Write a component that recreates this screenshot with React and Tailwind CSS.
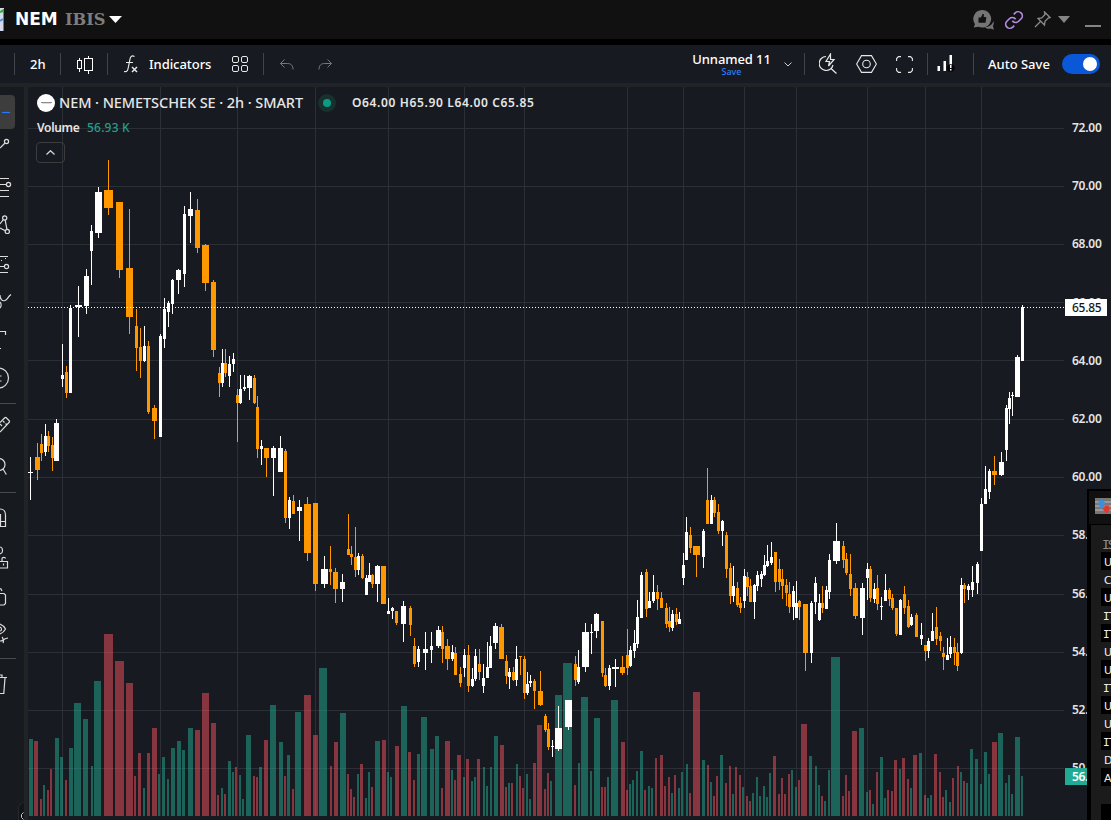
import React from "react";

// Candles per time block. Block units are a third of a pixel.
// Columns: direction (w = up, o = down), centre, body width in px, high, body top, body bottom, low.
const CANDLE_BLOCKS = [
  {
    x: 20,
    y: 150,
    rows: `w 31 5 921 966 969 1050;o 52 5 879 921 960 990;o 64 3 852 882 909 933;w 76 3 822 858 906 918;o 85 3 843 858 888 906;o 97 3 861 885 924 963;w 109 5 807 819 933 933;w 127 3 582 675 687 711;o 139 3 648 666 729 744;w 151 3 465 474 729 729;w 175 7 408 465 471 561;w 199 5 357 378 468 492;w 214 3 225 243 303 405;w 235 7 111 126 249 264;o 265 9 30 120 174 195;o 298 7 156 156 360 384;o 328 7 177 354 501 552;o 349 3 477 528 594 663;o 361 3 534 591 633 684;w 373 3 528 588 633 636;o 385 3 573 588 786 792;o 403 5 765 774 813 867;w 421 3 552 558 861 861;w 433 3 444 477 567 594;w 445 3 453 459 486 531;w 457 3 387 390 462 492;w 475 5 357 360 390 432;w 493 3 168 192 372 411;w 511 5 126 177 198 279;o 532 5 147 180 294 309;o 556 7 282 285 399 423;o 580 5 390 396 600 621;o 598 3 651 669 699 741;o 616 3 597 639 669 681;w 607 3 597 639 699 711;w 628 3 618 642 678 711;w 640 3 609 627 642 666;o 652 3 717 735 759 876;w 661 3 675 717 759 762;w 673 3 675 711 717 723;w 688 5 675 678 714 750;o 703 3 675 684 759 762;o 712 3 738 771 897 924`,
  },
  {
    x: 210,
    y: 340,
    rows: `w 154 3 300 318 327 375;o 169 5 324 324 354 411;w 190 5 318 324 354 468;w 211 5 288 324 396 396;o 226 3 327 333 534 549;w 238 3 471 480 534 567;o 250 3 465 483 522 522;w 268 5 480 501 513 603;o 292 7 471 492 639 663;o 316 5 489 489 732 753;w 343 7 648 687 732 744;o 361 3 618 687 696 735;o 376 5 684 696 747 789;w 397 5 702 726 747 786;o 415 3 522 627 645 645;o 424 3 618 642 651 675;o 436 3 561 651 690 711;w 445 3 639 648 690 705;o 457 3 642 648 714 717;w 469 3 705 714 765 765;w 478 3 669 705 726 726;o 487 3 702 705 732 744;w 502 5 675 678 732 786;o 520 5 678 678 792 792;w 535 3 774 813 822 822;w 547 3 801 804 813 837;o 559 3 813 813 849 855;w 580 5 783 798 852 906;o 601 3 798 804 855 888;o 613 3 894 918 972 981;w 625 3 918 927 966 981;w 646 5 876 927 939 990;w 664 3 876 918 930 969;w 685 5 858 870 918 924;o 697 3 858 876 927 969;o 712 5 897 918 957 990`,
  },
  {
    x: 440,
    y: 480,
    rows: `w 37 3 495 516 537 543;o 46 3 501 519 585 585;o 61 3 561 582 609 621;w 73 3 507 525 564 591;o 85 3 495 525 618 636;w 97 3 564 597 618 621;w 106 3 507 528 597 603;o 118 3 507 552 576 600;w 130 3 552 594 618 639;w 142 3 486 561 594 594;w 151 3 468 498 564 564;w 166 5 429 438 489 507;o 184 5 432 441 537 537;o 199 3 525 543 588 612;w 208 3 564 576 591 627;o 220 3 561 576 600 603;w 229 3 498 537 600 618;o 241 3 528 528 531 585;o 253 3 528 537 639 657;w 262 3 576 612 639 645;w 271 3 585 603 609 621;o 283 3 597 603 633 687;o 301 5 573 633 675 678;o 316 3 702 708 750 756;o 325 3 729 747 801 810;w 337 3 780 798 801 831;w 355 7 678 744 807 813;w 385 7 660 660 741 750;o 406 3 528 552 600 618;w 415 3 510 561 606 612;w 436 7 429 456 561 576;w 454 3 432 456 459 522;w 469 5 399 402 453 474;o 487 3 423 423 579 591;o 496 3 564 585 618 621;w 508 3 555 564 618 630;w 526 7 537 561 567 621;o 547 5 528 561 579 585;o 562 3 447 525 564 585;w 571 3 498 510 558 561;w 583 3 450 489 513 534;w 592 3 360 411 492 504;w 604 3 276 285 414 414;o 619 3 267 276 387 411;w 628 3 336 363 384 384;w 640 3 285 336 363 369;o 652 3 315 336 357 390;o 664 3 336 354 384 384;o 679 3 369 384 432 444;o 688 3 381 423 441 456;w 697 3 390 402 444 453;o 709 3 384 402 426 435`,
  },
  {
    x: 670,
    y: 460,
    rows: `w 28 3 456 477 492 492;w 40 3 279 315 354 375;w 49 3 171 216 300 300;o 61 3 201 225 264 279;o 79 7 258 258 285 351;w 100 3 207 213 291 324;o 112 3 24 120 192 192;w 124 3 105 120 192 192;o 133 3 111 120 159 171;o 145 3 132 156 213 222;w 157 3 180 183 213 258;o 169 3 216 225 327 354;o 181 3 309 324 408 432;w 190 3 318 378 408 426;o 202 3 366 384 435 441;o 211 3 411 429 444 459;w 223 3 327 348 423 444;o 232 3 336 351 381 408;o 241 3 357 378 426 426;w 253 3 372 375 426 477;w 262 3 333 345 378 393;w 274 3 333 342 357 381;w 283 3 285 315 345 348;w 292 3 255 303 318 321;w 304 3 246 291 309 315;o 316 3 276 276 366 396;o 328 3 297 327 366 390;o 337 3 327 357 378 417;o 349 3 357 375 399 438;o 358 3 366 402 441 459;w 370 3 378 393 441 480;w 379 3 363 429 474 474;o 388 3 420 423 441 480;o 406 5 432 432 579 633;w 424 3 423 429 579 609;w 436 3 351 369 426 462;o 457 3 378 429 444 459;w 448 3 402 429 480 483;w 469 3 378 390 447 447;w 478 3 282 300 396 417;w 499 7 189 243 303 312;o 520 3 243 258 300 324;o 529 3 279 297 339 345;o 541 3 282 342 387 408;o 556 5 369 384 468 477;w 577 5 369 384 474 525;w 592 3 309 327 354 420;o 601 3 318 327 414 426;w 613 3 369 387 417 429;o 622 3 345 384 432 450`,
  },
  {
    x: 860,
    y: 300,
    rows: `w 64 3 891 918 921 960;w 76 3 822 870 903 903;o 88 3 864 870 897 918;o 97 3 882 894 924 930;o 109 3 924 924 1002 1008;w 121 3 897 900 1005 1005;o 133 3 858 882 924 942;o 145 3 900 918 981 984;w 154 3 942 951 975 978;o 169 3 939 945 1011 1011;w 184 3 969 1005 1017 1035;o 196 3 1035 1035 1053 1083;w 205 3 1014 1023 1053 1074;w 217 3 939 993 1023 1023;o 229 3 921 981 1017 1035;o 241 3 996 1008 1023 1053;o 250 3 1041 1059 1071 1110;w 262 3 1014 1065 1080 1080;w 271 3 1008 1041 1062 1074;o 283 3 1014 1041 1059 1095;o 292 3 1029 1056 1098 1113;w 304 3 834 855 1059 1062;o 313 3 849 855 867 909;w 325 3 852 858 870 900;w 337 3 798 846 870 891;w 352 3 786 792 849 882;w 364 3 594 612 753 753;w 376 3 498 567 612 612;w 388 3 507 513 576 597;o 403 5 468 513 525 555;w 424 5 456 486 525 528;w 439 3 315 324 450 483;w 448 3 276 294 327 372;w 457 3 276 285 288 348;w 472 5 165 171 291 291;w 487 3 15 21 183 183`,
  },
];

// Volume per time block, same units. Columns: colour, left, right, top.
const VOLUME_BLOCKS = [
  {
    x: 20,
    y: 620,
    rows: `g 27 39 357;r 42 54 363;r 60 66 537;g 69 75 495;r 81 87 510;r 90 96 447;g 105 117 354;g 120 129 411;r 135 141 480;g 147 159 384;g 162 183 249;g 189 204 297;g 213 219 438;g 222 243 183;r 252 279 42;r 285 312 123;r 318 339 189;r 342 348 468;r 354 363 399;g 369 375 504;r 381 390 399;r 396 411 324;g 414 420 462;g 426 435 411;g 441 447 477;g 453 465 384;g 471 483 363;g 486 495 390;g 504 519 324;r 525 540 330;r 546 567 219;r 573 588 309;r 591 597 525;g 603 609 504;r 612 618 522;g 624 633 423;g 636 642 456;r 645 651 441;g 657 663 465;g 666 672 537;g 678 693 345;r 699 705 468;r 708 714 471;g 717 726 441`,
  },
  {
    x: 240,
    y: 640,
    rows: `r 72 84 300;g 90 108 195;g 117 129 306;r 132 138 408;g 141 150 345;r 156 162 447;g 165 183 216;r 192 213 165;r 219 234 285;g 237 261 84;r 270 276 378;r 282 294 306;g 300 318 219;r 321 327 402;r 330 336 447;r 339 345 471;g 351 357 402;r 360 369 372;g 375 381 474;g 384 390 396;r 393 399 441;g 405 420 303;r 426 438 300;g 441 447 396;g 450 456 411;r 465 477 318;g 483 501 198;r 504 513 336;r 519 525 420;g 531 540 342;g 543 561 231;g 570 582 327;g 585 597 288;r 603 609 444`,
  },
  {
    x: 440,
    y: 480,
    rows: `r 15 30 783;g 33 39 870;r 42 48 900;r 51 63 825;g 69 75 891;r 78 87 837;g 93 99 903;g 102 108 891;r 111 120 837;g 129 135 861;g 138 144 918;g 150 156 861;g 162 174 768;r 180 192 795;r 195 201 921;g 204 210 909;r 213 219 909;g 228 234 852;r 237 243 888;r 246 252 924;g 258 264 882;g 267 273 957;r 279 288 849;r 291 306 735;r 312 318 927;r 321 327 879;g 330 336 903;g 345 366 645;g 369 396 549;r 402 408 915;g 414 420 849;g 423 444 651;g 450 456 873;g 462 480 714;r 483 489 921;r 492 498 921;g 501 507 891;g 513 534 660;r 543 555 786;r 558 564 930;g 567 573 912;g 576 582 900;g 588 594 873;g 600 609 813;r 612 618 930;g 624 630 918;g 633 639 924;r 645 651 834;r 660 669 825;r 672 678 918;r 684 690 891;g 693 699 939;r 702 708 885`,
  },
  {
    x: 670,
    y: 460,
    rows: `g 24 30 984;g 33 39 936;g 48 54 912;r 57 63 999;r 69 90 696;g 96 105 900;r 111 117 915;g 120 126 966;r 129 135 1008;r 138 144 948;g 150 159 885;r 165 171 969;r 177 183 918;g 186 192 1002;r 195 201 921;r 207 213 945;g 216 222 981;r 228 234 1008;r 237 243 1023;g 246 252 999;g 258 264 951;g 267 273 1008;g 279 285 978;g 288 294 1011;g 297 303 939;r 309 318 888;r 324 330 1002;r 333 339 954;r 342 348 1002;r 354 360 942;g 363 369 930;g 375 381 981;r 384 390 960;r 393 411 792;g 417 426 888;g 435 441 918;g 444 450 975;r 453 459 1008;g 462 468 1023;g 474 480 930;g 483 510 591;r 516 522 1008;r 525 531 945;r 534 540 993;r 546 561 813;g 567 582 804`,
  },
  {
    x: 860,
    y: 640,
    rows: `g 18 24 456;r 27 33 450;g 36 42 492;r 48 54 396;g 60 69 351;g 72 78 474;r 81 87 450;r 93 99 453;r 102 111 360;g 117 123 387;r 126 135 354;r 141 147 417;g 150 156 444;r 159 171 345;g 177 186 339;r 192 198 465;g 201 207 474;g 210 216 465;r 222 231 342;r 237 243 396;r 246 252 471;g 255 261 450;g 267 273 486;r 276 282 414;r 291 297 378;g 300 306 396;r 309 315 423;g 318 324 429;g 330 339 327;g 345 354 357;g 360 366 432;g 372 381 336;g 384 390 402;r 396 411 306;g 414 429 279;g 435 441 429;g 444 450 405;g 453 459 462;g 465 480 291;g 483 489 408`,
  },
];

const parse = (blocks) =>
  blocks.flatMap(({ x, y, rows }) =>
    rows.split(";").map((row) => {
      const [kind, ...n] = row.split(" ");
      return { kind, x, y, n: n.map(Number) };
    })
  );

const candles = parse(CANDLE_BLOCKS).map(({ kind, x, y, n }) => {
  const [c, w, hi, top, bottom, lo] = n;
  const cx = x + Math.floor(c / 3);
  return { kind, cx, w, hi: y + hi / 3, top: y + top / 3, bottom: y + bottom / 3, lo: y + lo / 3 };
});

const volumes = parse(VOLUME_BLOCKS).map(({ kind, x, y, n }) => ({
  kind,
  x: x + n[0] / 3,
  w: (n[1] - n[0]) / 3,
  y: y + n[2] / 3,
}));

const GRID_X = [62, 160, 237, 315, 388, 464, 524, 627, 683, 744, 796, 867, 925, 981];
const GRID_Y = [128, 186, 244, 302, 360, 419, 477, 535, 594, 652, 710, 768];
const PRICES = ["72.00", "70.00", "68.00", "66.00", "64.00", "62.00", "60.00", "58.00", "56.00", "54.00", "52.00", "50.00"];

function Chart() {
  return (
    <svg className="block h-[733px] w-[1036px]" viewBox="28 87 1036 733" shapeRendering="crispEdges">
      {GRID_X.map((x) => (
        <rect key={x} x={x} y={87} width={1} height={729} fill="#2c2f36" />
      ))}
      {GRID_Y.map((y) => (
        <rect key={y} x={28} y={y} width={1036} height={1} fill="#2c2f36" />
      ))}
      {volumes.map((v, i) => (
        <rect key={i} x={v.x} y={v.y} width={v.w} height={816 - v.y} fill={v.kind === "g" ? "#22ab94" : "#f7525f"} fillOpacity={0.5} />
      ))}
      {candles.map((c, i) => (
        <g key={i} fill={c.kind === "w" ? "#ffffff" : "#ff9800"}>
          <rect x={c.cx} y={c.hi} width={1} height={c.lo - c.hi} />
          <rect x={c.cx - (c.w - 1) / 2} y={c.top} width={c.w} height={c.bottom - c.top} />
        </g>
      ))}
      <line x1={28} x2={1064} y1={307.5} y2={307.5} stroke="#ffffff" strokeDasharray="1 2" />
    </svg>
  );
}

const Sep = () => <div className="h-[22px] w-px shrink-0 bg-[#434448]" />;

function ToolIcon({ top, height, children }) {
  return (
    <svg
      className="block shrink-0"
      width={24}
      height={height}
      viewBox={`0 ${top} 24 ${height}`}
      fill="none"
      stroke="#dcdcdc"
      strokeWidth={1.2}
    >
      {children}
    </svg>
  );
}

function LeftTools() {
  return (
    <div className="flex w-6 shrink-0 flex-col overflow-hidden bg-[#171a1e]">
      <ToolIcon top={87} height={46}>
        <rect x={-8} y={95} width={23} height={34} rx={4} fill="#3d3d3e" stroke="none" />
        <path d="M2 112.5h8" stroke="#2979ff" />
      </ToolIcon>
      <ToolIcon top={133} height={32}>
        <circle cx={6.5} cy={141.5} r={2.1} />
        <path d="M5 143L0 148" />
      </ToolIcon>
      <ToolIcon top={165} height={40}>
        <path d="M0 178.5h9M0 184.5h6.3M0 190.5h9M0 196.5h9" />
        <circle cx={8.5} cy={184.5} r={2.1} />
      </ToolIcon>
      <ToolIcon top={205} height={40}>
        <circle cx={4.7} cy={218} r={2.1} />
        <circle cx={7.3} cy={231.4} r={2.1} />
        <path d="M5.2 220.2l1.7 9M3.3 219.7L0 224M0 228l5.3 2.7" />
      </ToolIcon>
      <ToolIcon top={245} height={40}>
        <path d="M0 256.5h8M0 266.5h4.3M0 272.5h8" />
        <path d="M1 260.5h1M5 258.5h1" />
        <circle cx={6.5} cy={266.5} r={2.1} />
      </ToolIcon>
      <ToolIcon top={285} height={35}>
        <path d="M0 295c0 4 2 6.500 5 5.500 2.500-.7 2.500-3.500 6-6M0 302c1.500 1.500 1.500 4.500 0 6" />
      </ToolIcon>
      <ToolIcon top={320} height={40}>
        <path d="M0 331.500h5.500v3.500M0 348.500h1" />
      </ToolIcon>
      <ToolIcon top={360} height={43}>
        <circle cx={-1.5} cy={378} r={10} />
        <path d="M0 376h1.500M0 381h1.500" />
      </ToolIcon>
      <div className="h-px w-4 shrink-0 bg-[#4a4a4c]" />
      <ToolIcon top={404} height={40}>
        <path d="M0 422.500l4.500-4.500q1-1 2 0l2.500 2.500q1 1 0 2L0 432M3 421l1.500 1.500M5.500 423.500l1 1M0 424l2 2" />
      </ToolIcon>
      <ToolIcon top={444} height={48}>
        <circle cx={-1} cy={464.5} r={6} />
        <path d="M3 469l3.300 5.500" />
      </ToolIcon>
      <div className="h-px w-4 shrink-0 bg-[#4a4a4c]" />
      <ToolIcon top={493} height={45}>
        <path d="M0 509c3.500 0 5.500 2.500 5.500 6v11.500H0M0 521.500h5.500M0.500 514v12" />
      </ToolIcon>
      <ToolIcon top={538} height={42}>
        <path d="M0 547c2 0 2.500 2 2.500 4s-1 2.500-2.500 3" />
        <path d="M-1 561.500h8.500v6.500H-1M2 561v-2.500c0-1.500 3.500-1.500 3.500 0M3.500 563.500v2" />
      </ToolIcon>
      <ToolIcon top={580} height={36}>
        <path d="M0 593.500h4l1.500 1.500v8.500l-1.500 1.500H0M0 588.500l1 .5 1 2" />
      </ToolIcon>
      <ToolIcon top={616} height={42}>
        <path d="M0 624c2.500 1 4.500 3 5.500 5-1 2-3 4-5.500 5M0 627c2 .5 2 4 0 4M0 641c4 0 2-2 8-3M2 637c1 1 2 4 1 6" />
      </ToolIcon>
      <div className="h-px w-4 shrink-0 bg-[#4a4a4c]" />
      <ToolIcon top={659} height={143}>
        <path d="M0 677.500h7M5 678l-1.200 15.500H0M0 675h2v2" />
      </ToolIcon>
      <div className="flex h-[18px] w-[6px] shrink-0 items-center justify-end self-end rounded-tl-md border-l border-t border-[#26282b] bg-[#131518] pt-2">
        <svg className="shrink-0" width={4} height={8} viewBox="0 0 4 8" fill="none" stroke="#c8c8c8">
          <path d="M3.500 .5L1.500 2.500v3l2 2" />
        </svg>
      </div>
    </div>
  );
}

function Header() {
  return (
    <div className="flex h-[39px] shrink-0 items-center bg-[#111111]">
      <svg className="h-6 w-[15px] shrink-0" viewBox="0 0 15 24">
        <rect x={0} y={0} width={4} height={23} fill="#d8d8ec" />
        <path d="M0 3L3.500 1v3L0 5z" fill="#2fae3a" />
        <path d="M0 13l3-2" stroke="#4a90e0" strokeWidth={2} />
        <path d="M3.500 1v22" stroke="#777" />
      </svg>
      <div className="w-[50px] whitespace-nowrap pt-px font-['DejaVu_Sans'] text-[17px] font-bold text-white">NEM</div>
      <div className="w-[44px] whitespace-nowrap pt-[2px] font-['DejaVu_Serif'] text-[16.200px] font-bold text-[#7d7d7d]">IBIS</div>
      <svg className="h-[7px] w-[13px]" viewBox="0 0 13 7">
        <path d="M0 0h13L6.500 7z" fill="#fff" />
      </svg>
      <div className="ml-auto flex items-center">
        <svg className="h-5 w-[22px]" viewBox="0 0 22 20">
          <path d="M9 0a9 8.800 0 1 1-3.600 16.800L.8 17.500l1.200-3.600A9 8.800 0 0 1 9 0z" fill="#757575" />
          <path d="M5.500 7.500H8L9.500 4h1.300v3H13l.3.800-.8 5H5.500z" fill="#111" />
          <path d="M20.500 11c.5 2 .3 3.500-.6 5l1.100 3.800-3.500-1.200c-2 .5-4 0-5.500-1.400 4 0 7-2.200 8.500-6.200z" fill="#757575" />
        </svg>
        <svg className="ml-[9px] h-5 w-5" viewBox="0 0 24 24" fill="none" stroke="#b48be6" strokeWidth={2}>
          <path d="M10 13a5 5 0 0 0 7.540.540l3-3a5 5 0 0 0-7.070-7.070l-1.720 1.710M14 11a5 5 0 0 0-7.540-.540l-3 3a5 5 0 0 0 7.070 7.070l1.710-1.710" />
        </svg>
        <svg className="ml-[10px] h-[17px] w-[17px]" viewBox="0 0 17 17" fill="none" stroke="#8a8a8a" strokeWidth={1.3}>
          <path d="M10.500 1l5.500 5.500-1.800.5-3.200 3.200-.5 3.800-6.500-6.500 3.800-.5L11 3.500zM6.500 10.500L1 16" />
        </svg>
        <svg className="ml-[7px] h-[7px] w-3" viewBox="0 0 12 7">
          <path d="M0 0h12L6 7z" fill="#858585" />
        </svg>
        <div className="ml-[15px] mr-[10px] mt-3 h-[2px] w-4 bg-[#858585]" />
      </div>
    </div>
  );
}

function Toolbar() {
  return (
    <div className="flex h-[38px] shrink-0 items-center bg-[#171a20] font-['Noto_Sans'] text-[13px] font-medium text-white">
      <div className="w-[14px]" />
      <Sep />
      <div className="w-[45px] pl-[15px] pt-px">2h</div>
      <Sep />
      <div className="w-[46px] pl-4">
        <svg className="h-[19px] w-[17px]" viewBox="0 0 17 19" fill="none" stroke="#fff" shapeRendering="crispEdges">
          <path d="M.5 5.500h4v8h-4zM2.500 2.500v3M2.500 13.500v3M7.500 3.500h8v12h-8zM11.500 .5v3M11.500 15.500v3" />
        </svg>
      </div>
      <Sep />
      <div className="flex w-[155px] items-center">
        <svg className="ml-4 h-[18px] w-[15px]" viewBox="0 0 15 18" fill="none" stroke="#e8e8e8" strokeWidth={1.2}>
          <path d="M0 16.500c3 .8 3.800-1 4.300-4L6 4C6.500 1 8 .3 10.500 1.500M2 7.500h7" />
          <path d="M8 12l5 5M13 12l-5 5" strokeWidth={1.5} />
        </svg>
        <div className="ml-[10px] w-[83px] pt-px tracking-[-0.05px]">Indicators</div>
        <svg className="h-[17px] w-[17px]" viewBox="0 0 17 17" fill="none" stroke="#e8e8e8">
          <rect x={0.5} y={0.5} width={6} height={6} rx={1.5} />
          <rect x={9.5} y={0.5} width={6} height={6} rx={1.5} />
          <rect x={0.5} y={9.5} width={6} height={6} rx={1.5} />
          <rect x={9.5} y={9.5} width={6} height={6} rx={1.5} />
        </svg>
      </div>
      <Sep />
      <svg className="ml-4 h-[11px] w-[14px]" viewBox="0 0 14 11" fill="none" stroke="#77787c">
        <path d="M4.500 .5l-4 4 4 4M.5 4.500h7c3.500 0 5.500 2 5.500 6" />
      </svg>
      <svg className="ml-6 h-[11px] w-[14px]" viewBox="0 0 14 11" fill="none" stroke="#77787c">
        <path d="M9.500 .5l4 4-4 4M13.500 4.500h-7C3 4.500 1 6.500 1 10.500" />
      </svg>
      <div className="ml-auto flex w-[78px] flex-col items-center whitespace-nowrap pl-px">
        <div className="h-[15px] leading-[15px] tracking-[-0.1px]">Unnamed 11</div>
        <div className="h-[10px] text-[9px] leading-[10px] text-[#2f7df6]">Save</div>
      </div>
      <svg className="ml-[14px] mr-[12px] h-[5px] w-2" viewBox="0 0 8 5" fill="none" stroke="#d0d0d0">
        <path d="M.5 .5L4 4 7.500 .5" />
      </svg>
      <Sep />
      <svg className="ml-[14px] h-[22px] w-[19px]" viewBox="0 0 19 22" fill="none" stroke="#e8e8e8" strokeWidth={1.2}>
        <path d="M7 3.500A7 7 0 1 0 14 12M12 15.500l5.500 5" />
        <path d="M11.500 1L7 8.500h3.500L9.500 13 15 6.500h-3.500z" />
      </svg>
      <svg className="ml-[18px] h-[18px] w-[21px]" viewBox="0 0 21 18" fill="none" stroke="#e8e8e8" strokeWidth={1.1}>
        <path d="M5.500 .6h10l4.900 8.400-4.900 8.400h-10L.6 9z" />
        <circle cx={10.5} cy={9} r={3.8} />
      </svg>
      <svg className="ml-[19px] h-[17px] w-[17px]" viewBox="0 0 17 17" fill="none" stroke="#e8e8e8" strokeWidth={1.1}>
        <path d="M.6 5V2.500L2.500 .6H5M12 .6h2.500l1.900 1.900V5M16.400 12v2.500l-1.900 1.900H12M5 16.400H2.500L.6 14.500V12" />
      </svg>
      <div className="w-[14px]" />
      <Sep />
      <svg className="ml-[9px] mr-[18px] h-[18px] w-[18px]" viewBox="0 0 18 18" fill="#fff">
        <rect x={0.5} y={11} width={2.5} height={5} />
        <rect x={6.5} y={6} width={2.5} height={10} />
        <rect x={12.5} y={0} width={2.5} height={16} />
        <circle cx={13.8} cy={13} r={3.8} fill="#050505" />
        <path d="M13 10h1.500v3H13zM13 14h1.500v1.500H13z" />
      </svg>
      <Sep />
      <div className="ml-[14px] w-[74px] pt-px">Auto Save</div>
      <div className="mr-[11px] flex h-5 w-[38px] items-center justify-end rounded-full bg-[#0a58d8] pr-[3px]">
        <div className="h-[14px] w-[14px] rounded-full bg-white" />
      </div>
    </div>
  );
}

function Legend() {
  return (
    <div className="absolute left-[8px] top-[7px] flex flex-col font-['Noto_Sans'] font-medium text-[#e6e6e6]">
      <div className="flex h-[18px] items-center whitespace-nowrap">
        <div className="ml-px flex h-[18px] w-[18px] items-center justify-center rounded-full bg-white">
          <div className="flex flex-col items-center">
            <div className="h-px w-[11px] bg-[#8c8c8c]" />
            <div className="h-px w-[9px] bg-[#dddddd]" />
          </div>
        </div>
        <div className="ml-1 w-[259px] text-[14.500px] tracking-[-0.08px]">NEM · NEMETSCHEK SE · 2h · SMART</div>
        <div className="flex h-[18px] w-[18px] items-center justify-center rounded-full bg-[#17312f]">
          <div className="h-2 w-2 rounded-full bg-[#0c9b83]" />
        </div>
        <div className="ml-4 text-[12px] font-semibold tracking-[0.64px]">O64.00 H65.90 L64.00 C65.85</div>
      </div>
      <div className="mt-[8px] flex h-4 items-center pl-px text-[12px]">
        <div className="w-[50px] font-semibold tracking-[-0.3px]">Volume</div>
        <div className="tracking-[0.2px] text-[#22a08b]">56.93 K</div>
      </div>
      <div className="mt-[6px] flex h-[21px] w-[29px] items-center justify-center rounded-sm border border-[#3c3c3e]">
        <svg width={9} height={5} viewBox="0 0 9 5" fill="none" stroke="#d8d8d8" strokeWidth={1.2}>
          <path d="M.5 4.500l4-3.800 4 3.800" />
        </svg>
      </div>
    </div>
  );
}

function PriceAxis() {
  return (
    <div className="relative h-[733px] w-[47px] shrink-0 overflow-hidden font-['Noto_Sans'] text-[12px] font-semibold tracking-[-0.25px] text-[#e4e4e4]">
      <div className="flex flex-col pl-2 pt-[12px]">
        {PRICES.map((p) => (
          <div key={p} className="flex h-[58.200px] shrink-0 items-center">
            {p}
          </div>
        ))}
      </div>
      <div className="absolute left-px top-[212px] flex h-[17px] w-[42px] items-center bg-white pl-[7px] font-medium text-[#16181d]">65.85</div>
      <div className="absolute left-px top-[681px] flex h-[17px] w-[46px] items-center bg-[#22ab94] pl-[7px] text-white">56.93K</div>
    </div>
  );
}

const TRADE_ROWS = ["U", "C", "U", "IT", "IT", "U", "U", "IT", "U", "U", "IT", "D", "A", "", ""];

function TradePanel() {
  return (
    <div className="absolute left-[1087px] top-[489px] h-[331px] w-6 overflow-hidden border-l-2 border-t-2 border-black bg-[#111111]">
      <div className="flex h-[33px] items-start pl-[6px] pt-[7px]">
        <svg className="h-4 w-4 shrink-0" viewBox="0 0 16 16">
          <rect width={16} height={16} fill="#777" />
          <path d="M0 4h16M0 8h16M0 12h16" stroke="#bbb" />
          <path d="M6.500 1l5 5H9v4.500H4.500V6H2z" fill="#3b8fe0" />
          <path d="M11.500 15.500l-4.500-5h2.500V7.500h4.500v3h2z" fill="#e03a30" />
        </svg>
      </div>
      <div className="border-l-2 border-t border-black bg-[#1b1b1b] pl-[10px] pt-[9px] font-['DejaVu_Sans'] text-[11px] text-[#eeeeee]">
        <div className="flex h-[18px] items-center pl-px pt-[3px] font-['DejaVu_Sans_Mono'] text-[13px] tracking-[-2px] text-[#8c8c8c]">IS</div>
        {TRADE_ROWS.map((t, i) => (
          <div key={i} className={(i % 2 === 0 ? "bg-black " : "") + "flex h-[18px] items-center pl-[3px] pt-[4px]"}>
            {t === "IT" ? (
              <>
                <span className="w-[5px] font-['DejaVu_Sans_Mono']">
                  <span className="-ml-px">I</span>
                </span>
                <span>T</span>
              </>
            ) : (
              t
            )}
          </div>
        ))}
      </div>
    </div>
  );
}

export default function App() {
  return (
    <div className="relative flex h-[820px] w-[1111px] flex-col overflow-hidden bg-black">
      <Header />
      <div className="h-[6px] shrink-0 bg-black" />
      <Toolbar />
      <div className="h-1 shrink-0 bg-[#212427]" />
      <div className="flex h-[733px] shrink-0">
        <LeftTools />
        <div className="w-1 shrink-0 bg-[#212427]" />
        <div className="relative flex w-[1083px] shrink-0 bg-[#171a20]">
          <Chart />
          <PriceAxis />
          <Legend />
        </div>
      </div>
      <TradePanel />
    </div>
  );
}
